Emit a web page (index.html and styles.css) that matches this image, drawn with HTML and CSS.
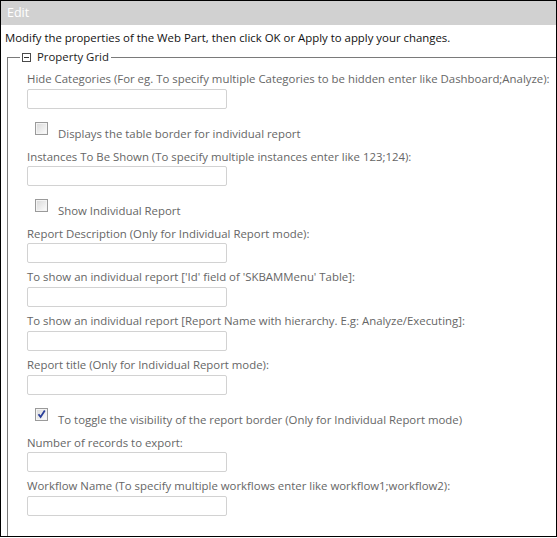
FILE: index.html
```html
<!DOCTYPE html>
<html>
<head>
<meta charset="utf-8">
<link rel="stylesheet" href="styles.css">
</head>
<body>
<div class="panel">
  <div class="header">Edit</div>
  <p class="intro">Modify the properties of the Web Part, then click OK or Apply to apply your changes.</p>
  <fieldset class="grid">
    <legend><span class="toggle"></span>Property Grid</legend>

    <div class="field">
      <label class="lbl">Hide Categories (For eg. To specify multiple Categories to be hidden enter like Dashboard;Analyze):</label>
      <input class="txt" type="text">
    </div>

    <div class="check">
      <span class="cb"></span>
      <span class="cb-text">Displays the table border for individual report</span>
    </div>

    <div class="field">
      <label class="lbl">Instances To Be Shown (To specify multiple instances enter like 123;124):</label>
      <input class="txt" type="text">
    </div>

    <div class="check">
      <span class="cb"></span>
      <span class="cb-text">Show Individual Report</span>
    </div>

    <div class="field">
      <label class="lbl">Report Description (Only for Individual Report mode):</label>
      <input class="txt" type="text">
    </div>

    <div class="field">
      <label class="lbl">To show an individual report ['Id' field of 'SKBAMMenu' Table]:</label>
      <input class="txt" type="text">
    </div>

    <div class="field">
      <label class="lbl">To show an individual report [Report Name with hierarchy. E.g: Analyze/Executing]:</label>
      <input class="txt" type="text">
    </div>

    <div class="field">
      <label class="lbl">Report title (Only for Individual Report mode):</label>
      <input class="txt" type="text">
    </div>

    <div class="check">
      <span class="cb checked"><svg viewBox="0 0 13 13" width="13" height="13"><path d="M3.5 6.2 L5.6 9 L9.8 2.6" fill="none" stroke="#2a3f9a" stroke-width="1.8"/></svg></span>
      <span class="cb-text">To toggle the visibility of the report border (Only for Individual Report mode)</span>
    </div>

    <div class="field">
      <label class="lbl">Number of records to export:</label>
      <input class="txt" type="text">
    </div>

    <div class="field">
      <label class="lbl">Workflow Name (To specify multiple workflows enter like workflow1;workflow2):</label>
      <input class="txt" type="text">
    </div>
  </fieldset>
</div>
</body>
</html>
```

FILE: styles.css
```css
html, body {
  margin: 0;
  padding: 0;
  background: #ffffff;
}

body {
  font-family: "Open Sans", "Noto Sans", sans-serif;
  font-size: 11.4px;
}

.panel {
  width: 555px;
  height: 535px;
  border: 1px solid #000;
  overflow: hidden;
  background: #fff;
}

.header {
  height: 24px;
  line-height: 24px;
  background: #d1d1d1;
  color: #fff;
  font-size: 12.5px;
  padding-left: 6px;
}

.intro {
  margin: 5px 0 0 4px;
  line-height: 16px;
  color: #111;
  white-space: nowrap;
}

.grid {
  margin: 3px 0 0 6px;
  padding: 0 0 40px 19px;
  width: 600px;
  border: 1px solid #7a7a7a;
  border-right: none;
  border-bottom: none;
  min-width: 0;
}

.grid legend {
  height: 16px;
  line-height: 16px;
  padding: 0 2px;
  margin-left: -7px;
  color: #222;
  display: flex;
  align-items: center;
}

.toggle {
  width: 7px;
  height: 7px;
  border: 1px solid #4a4a4a;
  margin-right: 6px;
  position: relative;
  background: #fff;
}

.toggle::after {
  content: "";
  position: absolute;
  left: 1px;
  right: 1px;
  top: 3px;
  height: 1px;
  background: #333;
}

.field {
  display: flex;
  flex-direction: column;
  align-items: flex-start;
}

.lbl {
  display: block;
  margin-top: 6px;
  margin-bottom: 2px;
  line-height: 16px;
  color: #666;
  white-space: nowrap;
}

.check + .field .lbl {
  margin-top: 7px;
  margin-bottom: 1px;
}

.txt {
  box-sizing: border-box;
  width: 200px;
  height: 20px;
  margin: 0;
  border: 1px solid #d2d2d2;
  border-radius: 2px;
  background: #fff;
  padding: 0 3px;
}

.check {
  height: 33px;
  display: flex;
  align-items: flex-start;
}

.cb {
  box-sizing: border-box;
  width: 13px;
  height: 13px;
  margin: 13px 0 0 8px;
  border: 1px solid #9a9a9a;
  background: linear-gradient(135deg, #d8d8d8 0%, #f2f2f2 70%, #ffffff 100%);
  box-shadow: inset 0 0 0 1px #f4f4f4;
  position: relative;
}

.cb svg {
  position: absolute;
  left: -1px;
  top: -1px;
}

.cb-text {
  margin-left: 10px;
  padding-top: 17px;
  line-height: 16px;
  color: #666;
  white-space: nowrap;
}
```
